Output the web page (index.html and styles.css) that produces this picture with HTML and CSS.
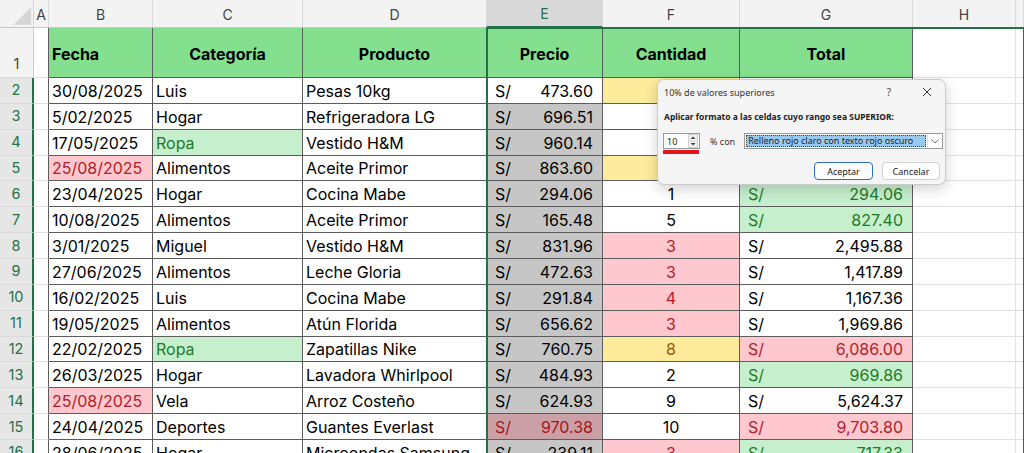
FILE: index.html
```html
<!DOCTYPE html>
<html lang="es">

<head>
    <meta charset="UTF-8" />
    <meta name="viewport" content="width=device-width, initial-scale=1.0" />
    <title>Ventas - Formato condicional</title>
    <link rel="stylesheet" href="styles.css">
</head>

<body>
    <!-- Hoja de cálculo -->
    <div class="sheet" id="sheet"></div>

    <!-- Diálogo: 10% de valores superiores -->
    <div class="dialog">
        <div class="dlg-title">
            <span class="dlg-name">10% de valores superiores</span>
            <span class="dlg-help">?</span>
            <span class="dlg-close">
                <svg width="10" height="10" viewBox="0 0 10 10">
                    <path d="M1 1 L9 9 M9 1 L1 9" stroke="#333" stroke-width="1" fill="none" />
                </svg>
            </span>
        </div>
        <div class="dlg-label">Aplicar formato a las celdas cuyo rango sea SUPERIOR:</div>
        <div class="dlg-row">
            <div class="spin">
                <span class="spin-val">10</span>
                <svg class="spin-btn" width="10" height="14" viewBox="0 0 10 14">
                    <rect x="0.5" y="0.5" width="9" height="13" fill="#f2f2f2" stroke="#cfcfcf" />
                    <line x1="1" y1="7" x2="9" y2="7" stroke="#cfcfcf" />
                    <path d="M2.5 5 L5 2.5 L7.5 5 Z" fill="#444" />
                    <path d="M2.5 9 L5 11.5 L7.5 9 Z" fill="#444" />
                </svg>
            </div>
            <span class="dlg-pct">% con</span>
            <div class="select">
                <span class="select-val">Relleno rojo claro con texto rojo oscuro</span>
                <span class="select-arrow">
                    <svg width="8" height="5" viewBox="0 0 8 5">
                        <path d="M0.5 0.5 L4 4 L7.5 0.5" stroke="#777" fill="none" />
                    </svg>
                </span>
            </div>
        </div>
        <div class="dlg-actions">
            <button class="btn primary">Aceptar</button>
            <button class="btn">Cancelar</button>
        </div>
    </div>

    <script>
        const sheet = document.getElementById('sheet');

        // fecha, categoría, producto, precio, cantidad, total, formatos
        const data = [
            ['30/08/2025', 'Luis', 'Pesas 10kg', '473.60', '7', '3,315.20', { f: 'neutral' }],
            ['5/02/2025', 'Hogar', 'Refrigeradora LG', '696.51', '2', '1,393.02', {}],
            ['17/05/2025', 'Ropa', 'Vestido H&M', '960.14', '1', '960.14', { c: 'good' }],
            ['25/08/2025', 'Alimentos', 'Aceite Primor', '863.60', '8', '6,908.80', { b: 'bad', f: 'neutral' }],
            ['23/04/2025', 'Hogar', 'Cocina Mabe', '294.06', '1', '294.06', { g: 'good' }],
            ['10/08/2025', 'Alimentos', 'Aceite Primor', '165.48', '5', '827.40', { g: 'good' }],
            ['3/01/2025', 'Miguel', 'Vestido H&M', '831.96', '3', '2,495.88', { f: 'bad' }],
            ['27/06/2025', 'Alimentos', 'Leche Gloria', '472.63', '3', '1,417.89', { f: 'bad' }],
            ['16/02/2025', 'Luis', 'Cocina Mabe', '291.84', '4', '1,167.36', { f: 'bad' }],
            ['19/05/2025', 'Alimentos', 'Atún Florida', '656.62', '3', '1,969.86', { f: 'bad' }],
            ['22/02/2025', 'Ropa', 'Zapatillas Nike', '760.75', '8', '6,086.00', { c: 'good', f: 'neutral', g: 'bad' }],
            ['26/03/2025', 'Hogar', 'Lavadora Whirlpool', '484.93', '2', '969.86', { g: 'good' }],
            ['25/08/2025', 'Vela', 'Arroz Costeño', '624.93', '9', '5,624.37', { b: 'bad' }],
            ['24/04/2025', 'Deportes', 'Guantes Everlast', '970.38', '10', '9,703.80', { e: 'bad', g: 'bad' }],
            ['28/06/2025', 'Hogar', 'Microondas Samsung', '239.11', '3', '717.33', { f: 'bad', g: 'good' }]
        ];

        function cell(cls, html) {
            const d = document.createElement('div');
            d.className = 'cell ' + cls;
            d.innerHTML = html || '';
            sheet.appendChild(d);
        }

        function money(v) {
            return `<span>S/</span><span>${v}</span>`;
        }

        // Encabezados de columna
        cell('corner', '<svg width="34" height="28" viewBox="0 0 34 28"><path d="M32 8 L32 26 L14 26 Z" fill="#d6d6d6"/></svg>');
        ['A', 'B', 'C', 'D', 'E', 'F', 'G', 'H', ''].forEach(l => {
            cell('ch' + (l === 'E' ? ' sel' : ''), l);
        });

        // Fila 1: títulos
        cell('rh first', '1');
        cell('edge');
        cell('t hd left', 'Fecha');
        cell('t hd', 'Categoría');
        cell('t hd', 'Producto');
        cell('t hd', 'Precio');
        cell('t hd', 'Cantidad');
        cell('t hd', 'Total');
        cell('');
        cell('');

        // Filas de datos
        data.forEach((r, i) => {
            const fmt = r[6];
            cell('rh sel', i + 2);
            cell('edge');
            cell('t ' + (fmt.b || ''), r[0]);
            cell('t ' + (fmt.c || ''), r[1]);
            cell('t', r[2]);
            const pick = i === 0 ? '' : (fmt.e === 'bad' ? 'pick-bad' : 'pick');
            cell('t money ' + pick, money(r[3]));
            cell('t num ' + (fmt.f || ''), r[4]);
            cell('t money ' + (fmt.g || ''), money(r[5]));
            cell('');
            cell('');
        });

        // Borde de la selección E1:E16
        const sel = document.createElement('div');
        sel.className = 'selection';
        sheet.appendChild(sel);
    </script>
</body>

</html>
```

FILE: styles.css
```css
body {
    margin: 0;
    height: 453px;
    overflow: hidden;
    position: relative;
    background: #fff;
    font-family: Inter, 'Liberation Sans', sans-serif;
    color: #000;
}

.sheet {
    position: relative;
    display: grid;
    grid-template-columns: 34px 15px 104px 150px 184px 116px 137px 173px 103px 1fr;
    grid-template-rows: 28px 50px repeat(15, 25.86px);
}

.cell {
    box-sizing: border-box;
    display: flex;
    align-items: flex-end;
    padding: 0 3px 2px;
    border-right: 1px solid #e1e1e1;
    border-bottom: 1px solid #e1e1e1;
    font-size: 16px;
    line-height: 20px;
    white-space: nowrap;
    overflow: hidden;
}

/* Encabezados de la hoja */
.corner {
    padding: 0;
    background: #f3f3f3;
    border-right: 1px solid #d4d4d4;
    border-bottom: 1px solid #c8c8c8;
}

.ch {
    justify-content: center;
    align-items: center;
    padding: 2px 0 0;
    background: #f3f3f3;
    color: #444;
    font-size: 14px;
    border-right: 1px solid #d9d9d9;
    border-bottom: 1px solid #c8c8c8;
}

.ch.sel {
    background: #d9d9d9;
    color: #217346;
    border-bottom: 2px solid #217346;
}

.rh {
    justify-content: center;
    align-items: center;
    padding: 0;
    background: #f3f3f3;
    color: #444;
    font-size: 14.5px;
    border-right: 1px solid #cfcfcf;
    border-bottom: 1px solid #dadada;
}

.rh.first {
    align-items: flex-end;
    padding-bottom: 3px;
}

.rh.sel {
    background: #e6e6e6;
    color: #217346;
    border-right: 2px solid #217346;
}

/* Tabla */
.edge {
    border-right-color: #5c5c5c;
}

.t {
    border-right-color: #5c5c5c;
    border-bottom-color: #5c5c5c;
}

.hd {
    justify-content: center;
    align-items: center;
    padding: 2px 3px 0;
    background: #84e08f;
    font-weight: 700;
}

.hd.left {
    justify-content: flex-start;
}

.money {
    justify-content: space-between;
    padding: 0 9px 2px 8px;
}

.num {
    justify-content: center;
}

/* Formato condicional */
.bad {
    background: #ffc7ce;
    color: #b0202c;
}

.good {
    background: #c6efce;
    color: #1e7a28;
}

.neutral {
    background: #ffeb9c;
    color: #9c5700;
}

.pick {
    background: #c6c6c6;
}

.pick-bad {
    background: #caa0a6;
    color: #a8141f;
}

/* borde de selección, encima de las celdas */
.selection {
    position: absolute;
    grid-column: 6;
    grid-row: 2 / 18;
    top: -1px;
    bottom: 0;
    left: -1px;
    right: -1px;
    border: 2px solid #217346;
    pointer-events: none;
    z-index: 2;
}

/* Diálogo */
.dialog {
    position: absolute;
    left: 657px;
    top: 79px;
    width: 289px;
    height: 106px;
    box-sizing: border-box;
    padding: 0 4px 0 6px;
    background: #f5f5f5;
    border: 1px solid #cacaca;
    border-radius: 7px;
    box-shadow: 0 4px 14px rgba(0, 0, 0, 0.18);
    font-family: 'Noto Sans', 'Open Sans', sans-serif;
    font-size: 9px;
    color: #222;
    white-space: nowrap;
    z-index: 5;
}

.dlg-title {
    display: flex;
    align-items: center;
    height: 24px;
}

.dlg-name {
    flex: 1;
    color: #333;
}

.dlg-help {
    width: 20px;
    text-align: center;
    font-size: 10px;
    color: #444;
}

.dlg-close {
    width: 28px;
    margin-left: 14px;
    display: flex;
    justify-content: center;
}

.dlg-label {
    margin-top: 6px;
    height: 14px;
    line-height: 14px;
    font-weight: 700;
    font-size: 8.5px;
}

.dlg-row {
    display: flex;
    align-items: center;
    margin-top: 9px;
    height: 16px;
}

.spin {
    position: relative;
    box-sizing: border-box;
    flex: none;
    width: 37px;
    height: 16px;
    margin-left: -1px;
    display: flex;
    align-items: center;
    justify-content: space-between;
    padding: 0 1px 0 3px;
    background: #fff;
    border: 1px solid #9a9a9a;
}

/* subrayado rojo de la captura */
.spin::after {
    content: '';
    position: absolute;
    left: -1px;
    top: 16px;
    width: 36px;
    height: 4px;
    background: #e3151c;
}

.dlg-pct {
    flex: none;
    margin-left: 10px;
    color: #333;
}

.select {
    box-sizing: border-box;
    flex: none;
    display: flex;
    width: 199px;
    height: 16px;
    margin-left: 9px;
    background: #fff;
    border: 1px solid #9a9a9a;
}

.select-val {
    flex: 1;
    margin: 1px;
    padding-left: 2px;
    line-height: 12px;
    background: #99c9ef;
    outline: 1px dotted #444;
    outline-offset: -1px;
}

.select-arrow {
    width: 14px;
    display: flex;
    align-items: center;
    justify-content: center;
    border-left: 1px solid #e2e2e2;
}

.dlg-actions {
    display: flex;
    justify-content: flex-end;
    gap: 9px;
    margin: 13px 1px 0 0;
}

.btn {
    box-sizing: border-box;
    width: 58px;
    height: 18px;
    padding: 0;
    font-family: inherit;
    font-size: 9px;
    color: #222;
    background: #fdfdfd;
    border: 1px solid #d0d0d0;
    border-radius: 4px;
}

.btn.primary {
    width: 59px;
    border: 1.5px solid #2b6cc4;
}
```
